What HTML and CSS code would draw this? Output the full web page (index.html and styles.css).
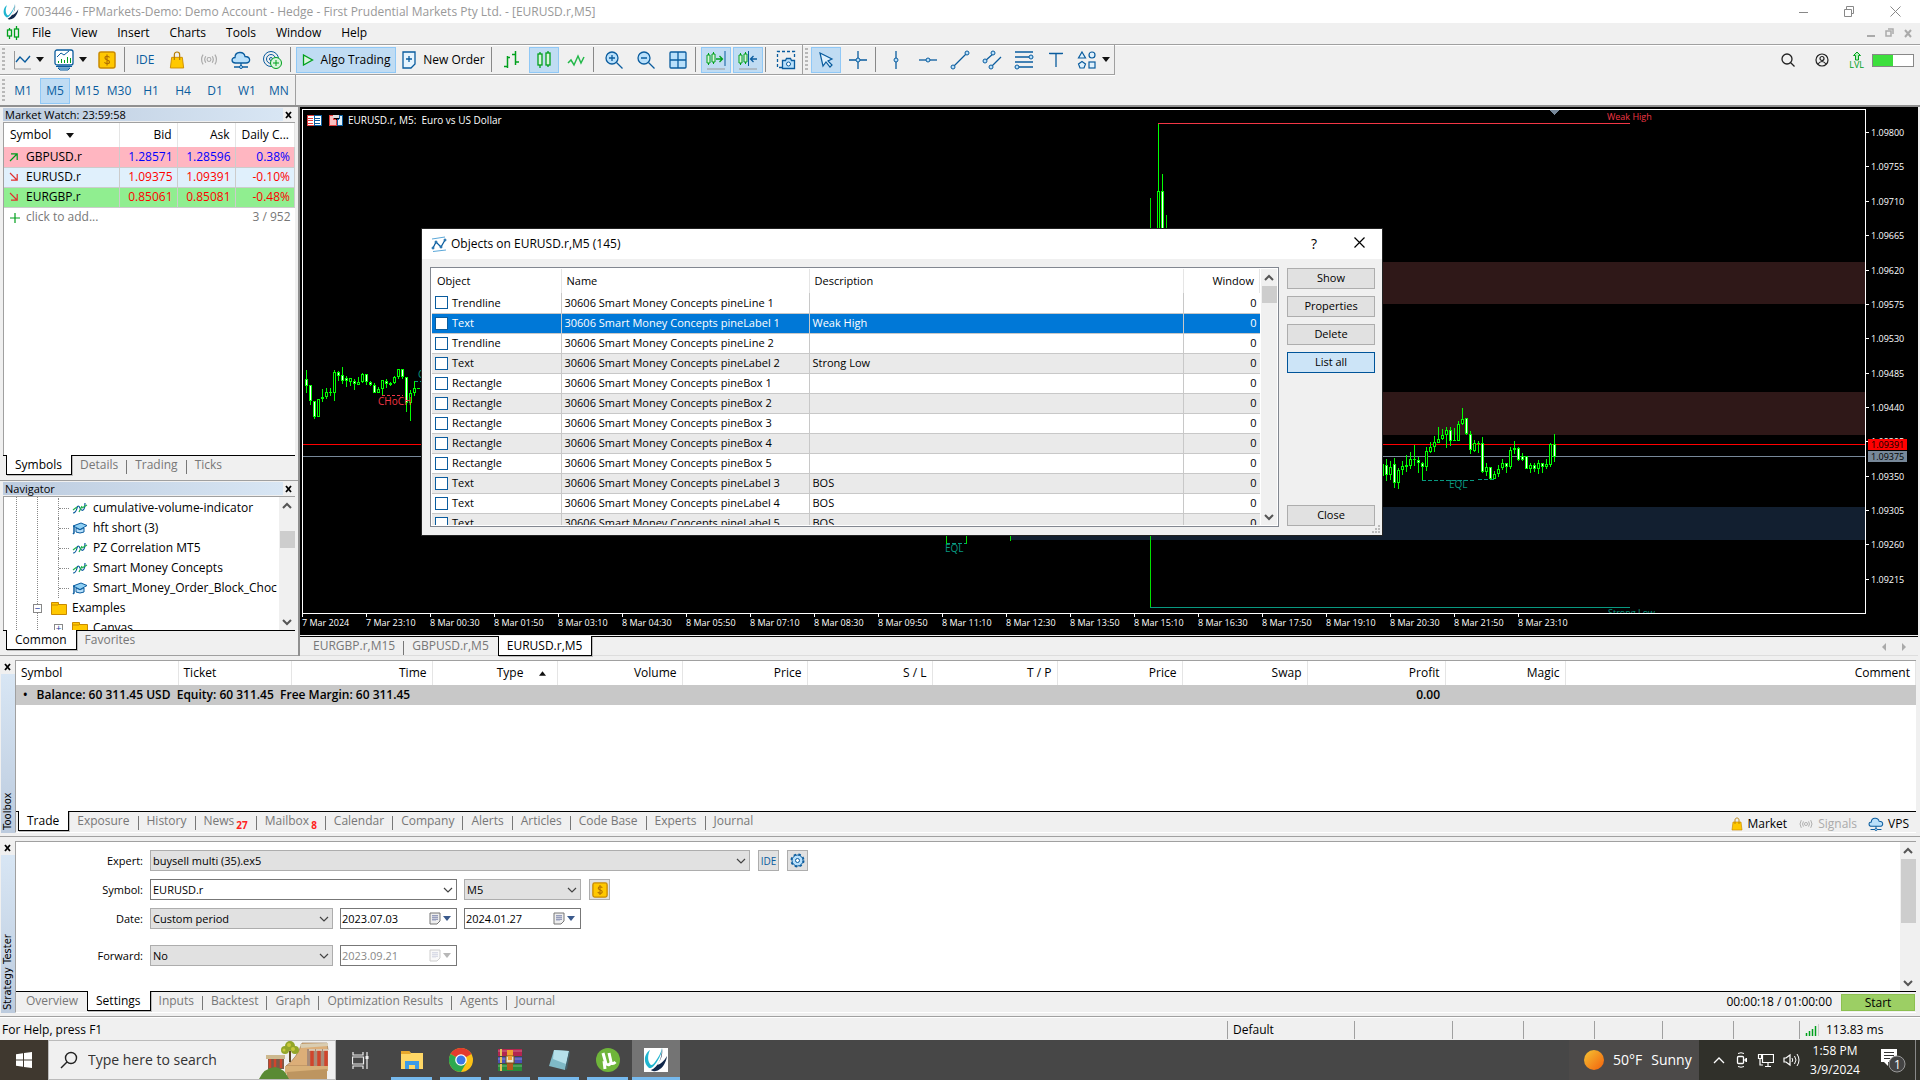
FILE: index.html
```html
<!DOCTYPE html>
<html lang="en">
<head>
<meta charset="utf-8">
<title>7003446 - FPMarkets-Demo: Demo Account - [EURUSD.r,M5]</title>
<link rel="stylesheet" href="styles.css">
</head>
<body>
<svg class="defs" aria-hidden="true">
  <symbol id="logo" viewBox="0 0 24 24"><path d="M6 2C1 5-2 14 5 20c3 1 6-3 9-8 2-4 4-7 4-12-1 5-4 10-7 14-2 3-4 4-5 2-3-4-2-10 0-14z" fill="#1fb5cf"/><path d="M18 0c1 7-1 12-5 17 4-1 7-4 10-9-1 8-6 14-11 15-3 .5-4 0-5-1 7-3 11-11 11-22z" fill="#12284b"/></symbol>
  <symbol id="chev-up" viewBox="0 0 10 10"><path d="M1 7l4-4 4 4" fill="none" stroke="#555" stroke-width="2"/></symbol>
  <symbol id="chev-down" viewBox="0 0 10 10"><path d="M1 3l4 4 4-4" fill="none" stroke="#555" stroke-width="2"/></symbol>
  <symbol id="chev-thin" viewBox="0 0 10 10"><path d="M1 3l4 4 4-4" fill="none" stroke="#444" stroke-width="1.200"/></symbol>
  <symbol id="tri" viewBox="0 0 8 5"><path d="M0 0h8L4 5z" fill="currentColor"/></symbol>
  <symbol id="cross" viewBox="0 0 8 8"><path d="M1 1l5 6M6 1L1 7" stroke="#000" stroke-width="1.800"/></symbol>
  <symbol id="dollar" viewBox="0 0 18 18"><rect x="1" y="1" width="16" height="16" rx="2" fill="#ffc800" stroke="#c98a00" stroke-width="1.500"/><path d="M11.500 6.500C11 5 7 4.500 7 7s4.500 1.500 4.500 4-4 2-5 .2M9 3.500v11" fill="none" stroke="#b06f00" stroke-width="1.200"/></symbol>
  <symbol id="bag" viewBox="0 0 18 20"><path d="M3 7h12l1.500 12h-15z" fill="#ffc800" stroke="#c98a00"/><path d="M6 10V4c0-4 6-4 6 0v6" fill="none" stroke="#b57b00" stroke-width="1.300"/></symbol>
  <symbol id="signal" viewBox="0 0 18 14"><circle cx="9" cy="7" r="1.800" fill="none" stroke="#aaa"/><path d="M6 4q-2 3 0 6M12 4q2 3 0 6M3.500 2.500q-3 4.500 0 9M14.500 2.500q3 4.500 0 9" fill="none" stroke="#aaa" stroke-width="1.100"/></symbol>
  <symbol id="cloud" viewBox="0 0 20 18"><path d="M4.500 12C0 12 0 6.500 4 6.500 4 0 13 0 14 5.500c6 0 6 6.500 1 6.500z" fill="#b9e0fb" stroke="#0a5c9e" stroke-width="1.300"/><path d="M10 12v3M3 16h14" stroke="#0a5c9e" stroke-width="1.300"/><circle cx="10" cy="16" r="1.500" fill="#b9e0fb" stroke="#0a5c9e"/></symbol>
  <symbol id="indicator" viewBox="0 0 16 14"><path d="M1 12q3 0 4-5 1-4 3 0t4 1q1-2 1-6" fill="none" stroke="#0a5c9e" stroke-width="1.200"/><path d="M1 9l4-3M7 11l3-6M10 7l5-3" fill="none" stroke="#23b14d" stroke-width="1.200"/></symbol>
  <symbol id="cap" viewBox="0 0 16 14"><path d="M1 5l8-3 6 2.500-7 4z" fill="#8fd0f5" stroke="#0a5c9e"/><path d="M4 7v4q4 2 8 0V7l-4 1.800z" fill="#b9e0fb" stroke="#0a5c9e"/><path d="M2 5v7l-1 1" stroke="#0a5c9e" stroke-width="1.500" fill="none"/></symbol>
  <symbol id="folder" viewBox="0 0 16 14"><path d="M.5 1.500h7v2h8v10H.5z" fill="#ffc800" stroke="#c98a00"/><path d="M1 4h6l1-1" stroke="#c98a00" fill="none"/></symbol>
  <symbol id="objects" viewBox="0 0 16 16"><path d="M2 12l3-6 5 5 4-7" fill="none" stroke="#0a5c9e" stroke-width="1.300"/><path d="M1 3l13-2M2 15.500l13-1.500" stroke="#5aa7d8" fill="none"/><g fill="#8fd0f5" stroke="#0a5c9e"><circle cx="2" cy="12" r="1"/><circle cx="5" cy="6" r="1"/><circle cx="10" cy="11" r="1"/><circle cx="14" cy="4" r="1"/></g></symbol>
  <symbol id="calendar" viewBox="0 0 12 13"><path d="M1 1h10v8l-3 3H1z" fill="#eee" stroke="#777"/><path d="M3 3.500h6M3 5.500h6M3 7.500h6M4 3v6M6 3v6M8 3v5" stroke="#8a93b5" stroke-width=".8"/></symbol>
</svg>

<header class="titlebar">
  <svg class="i16"><use href="#logo"/></svg>
  <h1>7003446 - FPMarkets-Demo: Demo Account - Hedge - First Prudential Markets Pty Ltd. - [EURUSD.r,M5]</h1>
  <div class="win-controls">
    <button aria-label="Minimize"><svg width="11" height="11"><path d="M1 6.500h9" stroke="#888"/></svg></button>
    <button aria-label="Restore"><svg width="11" height="11"><path d="M.5 3.500h7v7h-7zM2.500 3V.5h7v7H8" fill="none" stroke="#888"/></svg></button>
    <button aria-label="Close"><svg width="11" height="11"><path d="M.5.5l10 10M10.500.5l-10 10" stroke="#888"/></svg></button>
  </div>
</header>

<nav class="menubar" aria-label="Main menu">
  <svg width="14" height="14"><g fill="#f0f0f0" stroke="#00a01c" stroke-width="1.300"><path d="M3.500 2v11M10.500 0v14"/><rect x="1.500" y="4" width="4" height="6"/><rect x="8.500" y="3" width="4" height="8"/></g></svg>
  <button>File</button><button>View</button><button>Insert</button><button>Charts</button><button>Tools</button><button>Window</button><button>Help</button>
  <div class="mdi-controls"><svg width="46" height="10"><path d="M0 8h8" stroke="#aaa" stroke-width="2"/><path d="M19 3h5v5h-5zM21 1h5v5" fill="none" stroke="#aaa" stroke-width="1.500"/><path d="M38 2l6 7M44 2l-6 7" stroke="#aaa" stroke-width="2"/></svg></div>
</nav>

<div class="toolbar">
  <div class="bar">
    <span class="grip"></span>
    <button class="tool drop" aria-label="Chart line"><svg width="18" height="20"><path d="M1.500 1v18H18" fill="none" stroke="#999"/><path d="M3 12l4-5 5 5 5-6" fill="none" stroke="#0a5c9e" stroke-width="1.400"/></svg><svg class="tri"><use href="#tri"/></svg></button>
    <button class="tool drop" aria-label="Profiles"><svg width="20" height="22"><rect x="1" y="1" width="18" height="15" rx="2" fill="#fff" stroke="#0a5c9e" stroke-width="1.300"/><path d="M3 8l4-4 3 2 5-4" fill="none" stroke="#0a5c9e"/><path d="M4.500 14v-2M7.500 14v-4M10.500 14v-3M13.500 14V8M16.500 14v-5" stroke="#00a01c"/><path d="M2 17.500h16M4 19l2 2h8l2-2z" fill="#b9e0fb" stroke="#0a5c9e"/></svg><svg class="tri"><use href="#tri"/></svg></button>
    <button class="tool" aria-label="Market watch"><svg width="18" height="18"><use href="#dollar"/></svg></button>
    <span class="tsep"></span>
    <button class="tool blue">IDE</button>
    <button class="tool" aria-label="Market"><svg width="16" height="18"><use href="#bag"/></svg></button>
    <button class="tool" aria-label="Signals"><svg width="20" height="15"><use href="#signal"/></svg></button>
    <button class="tool" aria-label="Virtual hosting"><svg width="20" height="18"><use href="#cloud"/></svg></button>
    <button class="tool" aria-label="Copy trading"><svg width="20" height="20"><g fill="none" stroke="#0a5c9e"><circle cx="8" cy="9" r="7.500"/><circle cx="8" cy="9" r="4.500"/><circle cx="8" cy="9" r="1.500"/></g><circle cx="13" cy="13" r="5.500" fill="#d9f5dd" stroke="#00a01c"/><path d="M10 13h6M13 10v6" stroke="#00a01c"/></svg></button>
    <span class="tsep"></span>
    <button class="tool on algo"><svg width="12" height="12"><path d="M1.500 1v10l9-5z" fill="#d9f5dd" stroke="#00a01c" stroke-width="1.300"/></svg>Algo Trading</button>
    <button class="tool order"><svg width="14" height="18"><path d="M1 1h12v12l-4 4H1z" fill="#e6f4fe" stroke="#0a5c9e" stroke-width="1.300"/><path d="M4 8h6M7 5v6" stroke="#0a5c9e" stroke-width="1.300"/></svg>New Order</button>
    <span class="tsep"></span>
    <button class="tool" aria-label="Bar chart"><svg width="18" height="18"><path d="M4.500 5v12M4.500 6.500H7M1 15.500h3.500M12.500 0v14M9 3.500h3.500M12.500 11H16" fill="none" stroke="#00a01c" stroke-width="1.500"/></svg></button>
    <button class="tool on" aria-label="Candles"><svg width="16" height="18"><path d="M4 1v16M12 0v16" stroke="#00a01c" stroke-width="1.300"/><rect x="2" y="3" width="4" height="11" fill="#d9f5dd" stroke="#00a01c" stroke-width="1.300"/><rect x="10" y="2" width="4" height="12" fill="#d9f5dd" stroke="#00a01c" stroke-width="1.300"/></svg></button>
    <button class="tool" aria-label="Line chart"><svg width="18" height="14"><path d="M1 10l3-3 3 5 4-9 3 7 3-6" fill="none" stroke="#23b84a" stroke-width="1.500"/></svg></button>
    <span class="tsep"></span>
    <button class="tool" aria-label="Zoom in"><svg width="18" height="18"><circle cx="7" cy="7" r="6" fill="#b9e0fb" stroke="#0a5c9e" stroke-width="1.300"/><path d="M4 7h6M7 4v6M11.500 11.500l6 6" stroke="#0a5c9e" stroke-width="1.300"/></svg></button>
    <button class="tool" aria-label="Zoom out"><svg width="18" height="18"><circle cx="7" cy="7" r="6" fill="#b9e0fb" stroke="#0a5c9e" stroke-width="1.300"/><path d="M4 7h6M11.500 11.500l6 6" stroke="#0a5c9e" stroke-width="1.300"/></svg></button>
    <button class="tool" aria-label="Tile windows"><svg width="18" height="18"><rect x="1" y="1" width="16" height="16" rx="1" fill="#b9e0fb" stroke="#0a5c9e" stroke-width="1.300"/><path d="M1 9h16M9 1v16" stroke="#0a5c9e" stroke-width="1.300"/></svg></button>
    <span class="tsep"></span>
    <button class="tool on" aria-label="Auto scroll"><svg width="20" height="20"><path d="M2.500 3v12M7.500 2v12" stroke="#00a01c"/><path d="M1 5h3v8H1zM6 4h3v8H6z" fill="#d9f5dd" stroke="#00a01c"/><path d="M10 9h6M13.500 6l3 3-3 3" fill="none" stroke="#00a01c" stroke-width="1.300"/><path d="M19 1v15" stroke="#0a5c9e"/><path d="M1 19h18" stroke="#999"/></svg></button>
    <button class="tool on" aria-label="Chart shift"><svg width="20" height="20"><path d="M2.500 3v12M7.500 2v12" stroke="#00a01c"/><path d="M1 5h3v8H1zM6 4h3v8H6z" fill="#d9f5dd" stroke="#00a01c"/><path d="M19 9h-6M15.500 6l-3 3 3 3" fill="none" stroke="#0a5c9e" stroke-width="1.300"/><path d="M10.500 1v15" stroke="#0a5c9e"/><path d="M1 19h18" stroke="#999"/></svg></button>
    <span class="tsep"></span>
    <button class="tool" aria-label="Screenshot"><svg width="20" height="20"><path d="M6 17.500H1.500V1.500h17V8" fill="none" stroke="#0a5c9e" stroke-width="1.300" stroke-dasharray="3 2"/><path d="M6.500 10.500h3l1-2h4l1 2h3v8h-12z" fill="#b9e0fb" stroke="#0a5c9e" stroke-width="1.300"/><circle cx="12.500" cy="14" r="2" fill="#fff" stroke="#0a5c9e"/></svg></button>
  </div>
  <div class="bar">
    <span class="grip"></span>
    <button class="tool on" aria-label="Cursor"><svg width="16" height="16"><path d="M2 1l3 13 3-4 4 5 2-2-4-4 4-2z" fill="#dff1fd" stroke="#0a5c9e" stroke-width="1.200"/></svg></button>
    <button class="tool" aria-label="Crosshair"><svg width="18" height="18"><path d="M9 0v18M0 9h18" stroke="#0a5c9e" stroke-width="1.300"/><circle cx="9" cy="9" r="2" fill="#b9e0fb" stroke="#0a5c9e"/></svg></button>
    <span class="tsep"></span>
    <button class="tool" aria-label="Vertical line"><svg width="18" height="18"><path d="M9 0v18" stroke="#0a5c9e" stroke-width="1.300"/><circle cx="9" cy="9" r="2" fill="#b9e0fb" stroke="#0a5c9e"/></svg></button>
    <button class="tool" aria-label="Horizontal line"><svg width="18" height="18"><path d="M0 9h18" stroke="#0a5c9e" stroke-width="1.300"/><circle cx="9" cy="9" r="2" fill="#b9e0fb" stroke="#0a5c9e"/></svg></button>
    <button class="tool" aria-label="Trendline"><svg width="20" height="20"><path d="M3 17L17 3" stroke="#0a5c9e" stroke-width="1.300"/><g fill="#b9e0fb" stroke="#0a5c9e"><circle cx="3" cy="17" r="2"/><circle cx="17" cy="3" r="2"/></g></svg></button>
    <button class="tool" aria-label="Channel"><svg width="20" height="20"><path d="M3 11l9-8M9 17l10-10" stroke="#0a5c9e" stroke-width="1.300"/><g fill="#b9e0fb" stroke="#0a5c9e"><circle cx="3" cy="11" r="2"/><circle cx="11" cy="3" r="2"/><circle cx="9" cy="17" r="2"/></g></svg></button>
    <button class="tool" aria-label="Fibonacci"><svg width="20" height="20"><path d="M1 2h18M1 7h18M1 12h18M1 17h18" stroke="#0a5c9e" stroke-width="1.300"/><g fill="#b9e0fb" stroke="#0a5c9e"><circle cx="17" cy="7" r="2"/><circle cx="3" cy="17" r="2"/></g></svg></button>
    <button class="tool" aria-label="Text"><svg width="14" height="16"><path d="M.5 2V1.500h13V2M7 1.500V15" fill="none" stroke="#0a5c9e" stroke-width="1.300"/></svg></button>
    <button class="tool drop" aria-label="Shapes"><svg width="20" height="20"><g fill="#dff1fd" stroke="#0a5c9e" stroke-width="1.200"><path d="M5 2l3.500 6h-7z"/><circle cx="15" cy="5" r="3"/><path d="M5 11.500l3.500 2.500-1.500 4H3l-1.500-4z"/><rect x="12" y="12" width="6" height="6"/></g></svg><svg class="tri"><use href="#tri"/></svg></button>
  </div>
  <div class="right-tools">
    <button aria-label="Search"><svg width="14" height="14"><circle cx="6" cy="6" r="5" fill="none" stroke="#222" stroke-width="1.300"/><path d="M9.500 9.500l4 4" stroke="#222" stroke-width="1.300"/></svg></button>
    <button aria-label="Account"><svg width="14" height="14"><g fill="none" stroke="#222" stroke-width="1.200"><circle cx="7" cy="7" r="6"/><circle cx="7" cy="5.500" r="2"/><path d="M3 11q4-5 8 0"/></g></svg></button>
    <span class="lvl"><svg width="10" height="10"><path d="M5 1l3.500 3.500h-2V9h-3V4.500h-2z" fill="#b6f2bd" stroke="#00a01c"/></svg>LVL</span>
    <span class="level-bar"></span>
  </div>
</div>
<div class="toolbar frames">
  <div class="bar">
    <span class="grip"></span>
    <button class="tool">M1</button><button class="tool on">M5</button><button class="tool">M15</button><button class="tool">M30</button><button class="tool">H1</button><button class="tool">H4</button><button class="tool">D1</button><button class="tool">W1</button><button class="tool">MN</button>
  </div>
</div>

<main class="workspace">
  <aside class="side">
    <section class="panel watch">
      <div class="panel-title"><h2>Market Watch: 23:59:58</h2><button aria-label="Close Market Watch"><svg class="x"><use href="#cross"/></svg></button></div>
      <div class="panel-body">
        <table>
          <thead><tr><th class="sym">Symbol <svg class="tri"><use href="#tri"/></svg></th><th>Bid</th><th>Ask</th><th>Daily C...</th></tr></thead>
          <tbody>
            <tr class="pink rise"><td><svg width="8" height="8"><path d="M0 8l7-7M1 .8h6.200V7" fill="none" stroke="#009a1c" stroke-width="1.200"/></svg>GBPUSD.r</td><td>1.28571</td><td>1.28596</td><td>0.38%</td></tr>
            <tr class="pale fall"><td><svg width="8" height="8"><path d="M0 0l7 7M1 7.200h6.200V1" fill="none" stroke="#e03030" stroke-width="1.200"/></svg>EURUSD.r</td><td>1.09375</td><td>1.09391</td><td>-0.10%</td></tr>
            <tr class="green fall"><td><svg width="8" height="8"><path d="M0 0l7 7M1 7.200h6.200V1" fill="none" stroke="#e03030" stroke-width="1.200"/></svg>EURGBP.r</td><td>0.85061</td><td>0.85081</td><td>-0.48%</td></tr>
            <tr class="add"><td colspan="3"><svg width="10" height="10"><path d="M0 5h10M5 0v10" stroke="#00a01c" stroke-width="1.200"/></svg>click to add...</td><td>3 / 952</td></tr>
          </tbody>
        </table>
      </div>
      <div class="tabs"><button class="active">Symbols</button><button>Details</button><button>Trading</button><button>Ticks</button></div>
    </section>
    <section class="panel navigator">
      <div class="panel-title"><h2>Navigator</h2><button aria-label="Close Navigator"><svg class="x"><use href="#cross"/></svg></button></div>
      <div class="panel-body tree-wrap">
        <ul class="tree">
          <li class="leaf"><svg><use href="#indicator"/></svg>cumulative-volume-indicator</li>
          <li class="leaf"><svg><use href="#cap"/></svg>hft short (3)</li>
          <li class="leaf"><svg><use href="#indicator"/></svg>PZ Correlation MT5</li>
          <li class="leaf"><svg><use href="#indicator"/></svg>Smart Money Concepts</li>
          <li class="leaf"><svg><use href="#cap"/></svg>Smart_Money_Order_Block_Choc</li>
          <li class="node"><span class="box">−</span><svg><use href="#folder"/></svg>Examples</li>
          <li class="node sub"><span class="box">+</span><svg><use href="#folder"/></svg>Canvas</li>
        </ul>
        <div class="scroll"><svg><use href="#chev-up"/></svg><span class="thumb nav-thumb"></span><svg class="end"><use href="#chev-down"/></svg></div>
      </div>
      <div class="tabs"><button class="active">Common</button><button>Favorites</button></div>
    </section>
  </aside>

  <section class="charts">
    <svg class="chart" role="img" aria-label="EURUSD.r M5 candlestick chart">
      <g transform="translate(-300 -107)" shape-rendering="crispEdges">
        <rect x="1381" y="262" width="484" height="42" fill="#2f1818"/>
        <rect x="1381" y="392" width="484" height="43" fill="#2f1818"/>
        <rect x="1011" y="507" width="854" height="33" fill="#121f30"/>
        <path d="M303 444.500H1865" stroke="#f00"/>
        <path d="M303 456.500H1865" stroke="#778899"/>
        <path d="M1158 123.500H1630" stroke="#f23645"/>
        <path d="M1150 607.500H1630" stroke="#089981"/>
        <path d="M382 395.500H403" stroke="#f23645" stroke-dasharray="3 2"/>
        <path d="M414 381.500h8M1422 480.500H1476M1478 479.500H1494M946 543.500H966" stroke="#089981" stroke-dasharray="4 2" fill="none"/>
        <path d="M946.500 535v9M966.500 535v9M1010.500 535v6M1150.500 535v72M1150.500 198v31M1166.500 215v14" stroke="#00e000" fill="none"/>
        <g id="candles"></g>
        <path d="M302.500 614V109.500H1865.500V613.500M302 613.500H1866" fill="none" stroke="#fff"/>
        <path d="M1549 110h10l-5 5z" fill="#778899"/>
        <g id="price-ticks" class="axis"></g>
        <g id="time-ticks" class="axis"></g>
        <rect x="1868" y="439" width="39" height="11" fill="#f00"/>
        <rect x="1868" y="451" width="39" height="11" fill="#778899"/>
        <g class="axis"><text class="ink" x="1871" y="448">1.09391</text><text class="ink" x="1871" y="460">1.09375</text></g>
        <g class="marks"><text class="red" x="1607" y="120">Weak High</text><text class="red big" x="378" y="405">CHoCH</text><text class="teal big" x="1449" y="488">EQL</text><text class="teal big" x="945" y="552">EQL</text><text class="teal big" x="418" y="378">C</text></g>
        <svg x="1600" y="600" width="60" height="13"><text class="teal marks" x="8" y="16">Strong Low</text></svg>
        <path d="M307 115h7v10h-7z" fill="#fff" stroke="#e04040"/><path d="M314 115h7v10h-7z" fill="#fff" stroke="#0a5c9e"/><path d="M308 118h5M308 120.500h5M308 123h5" stroke="#e04040"/><path d="M315 118h5M315 120.500h5M315 123h5" stroke="#0a5c9e"/>
        <path d="M329 115h4v4l3 1v5h-7z" fill="#f8c0c0" stroke="#e04040"/><path d="M337 120l2-1v-4h3v10h-5z" fill="#dff1fd" stroke="#0a5c9e"/><path d="M333 115h6v3h-6z" fill="#ddd"/>
        <text class="chart-title" x="348" y="124" xml:space="preserve">EURUSD.r, M5:  Euro vs US Dollar</text>
      </g>
    </svg>
    <div class="tabs chart-tabs"><button>EURGBP.r,M15</button><button>GBPUSD.r,M5</button><button class="active">EURUSD.r,M5</button><svg class="arrows" width="26" height="8"><path d="M4 0v8L0 4zM20 0v8l4-4z" fill="#aaa"/></svg></div>
  </section>
</main>

<section class="dock toolbox">
  <div class="strip"><button aria-label="Close Toolbox"><svg class="x"><use href="#cross"/></svg></button><span>Toolbox</span></div>
  <div class="dock-main">
    <div class="dock-body">
      <table>
        <colgroup><col class="c162"><col class="c113"><col class="c141"><col class="c125"><col class="c125"><col class="c125"><col class="c125"><col class="c125"><col class="c125"><col class="c125"><col class="c138"><col class="c120"><col></colgroup>
        <thead><tr><th class="l">Symbol</th><th class="l">Ticket</th><th>Time</th><th>Type <svg class="tri"><use href="#tri"/></svg></th><th>Volume</th><th>Price</th><th>S / L</th><th>T / P</th><th>Price</th><th>Swap</th><th>Profit</th><th>Magic</th><th>Comment</th></tr></thead>
        <tbody><tr><td colspan="10"><span class="dot">•</span>Balance: 60 311.45 USD&nbsp; Equity: 60 311.45&nbsp; Free Margin: 60 311.45</td><td class="r">0.00</td><td colspan="2"></td></tr></tbody>
      </table>
    </div>
    <div class="tabs"><button class="active">Trade</button><button>Exposure</button><button>History</button><button>News<sub>27</sub></button><button>Mailbox<sub>8</sub></button><button>Calendar</button><button>Company</button><button>Alerts</button><button>Articles</button><button>Code Base</button><button>Experts</button><button>Journal</button>
      <div class="services"><a href="#market"><svg width="12" height="14"><use href="#bag"/></svg>Market</a><a href="#signals" class="off"><svg width="16" height="12"><use href="#signal"/></svg>Signals</a><a href="#vps"><svg width="16" height="14"><use href="#cloud"/></svg>VPS</a></div>
    </div>
  </div>
</section>

<section class="dock tester">
  <div class="strip"><button aria-label="Close Strategy Tester"><svg class="x"><use href="#cross"/></svg></button><span>Strategy Tester</span></div>
  <div class="dock-main">
    <div class="dock-body">
      <form class="settings">
        <div class="row"><label for="expert">Expert:</label><span class="sel w600"><select id="expert"><option>buysell multi (35).ex5</option></select><svg><use href="#chev-thin"/></svg></span><button type="button" class="sq blue">IDE</button><button type="button" class="sq" aria-label="Expert settings"><svg width="15" height="15"><circle cx="7.500" cy="7.500" r="5.500" fill="#b9e0fb" stroke="#0a5c9e"/><circle cx="7.500" cy="7.500" r="6.200" fill="none" stroke="#0a5c9e" stroke-dasharray="2.500 2.400" stroke-width="1.600"/><circle cx="7.500" cy="7.500" r="2" fill="#fff" stroke="#0a5c9e"/></svg></button></div>
        <div class="row"><label for="symbol">Symbol:</label><span class="sel w307 white"><select id="symbol"><option>EURUSD.r</option></select><svg><use href="#chev-thin"/></svg></span><span class="sel w117"><select aria-label="Timeframe"><option>M5</option></select><svg><use href="#chev-thin"/></svg></span><button type="button" class="sq" aria-label="Symbol specification"><svg width="16" height="16"><use href="#dollar"/></svg></button></div>
        <div class="row"><label for="period">Date:</label><span class="sel w183"><select id="period"><option>Custom period</option></select><svg><use href="#chev-thin"/></svg></span><span class="date"><input aria-label="From" value="2023.07.03"><svg width="12" height="13"><use href="#calendar"/></svg><svg class="tri"><use href="#tri"/></svg></span><span class="date"><input aria-label="To" value="2024.01.27"><svg width="12" height="13"><use href="#calendar"/></svg><svg class="tri"><use href="#tri"/></svg></span></div>
        <div class="row forward"><label for="forward">Forward:</label><span class="sel w183"><select id="forward"><option>No</option></select><svg><use href="#chev-thin"/></svg></span><span class="date off"><input aria-label="Forward date" value="2023.09.21" disabled><svg width="12" height="13"><use href="#calendar"/></svg><svg class="tri"><use href="#tri"/></svg></span></div>
      </form>
      <div class="scroll"><svg><use href="#chev-up"/></svg><span class="thumb tester-thumb"></span><svg class="end"><use href="#chev-down"/></svg></div>
    </div>
    <div class="tabs"><button>Overview</button><button class="active">Settings</button><button>Inputs</button><button>Backtest</button><button>Graph</button><button>Optimization Results</button><button>Agents</button><button>Journal</button>
      <div class="services"><span>00:00:18 / 01:00:00</span><button class="start">Start</button></div>
    </div>
  </div>
</section>

<footer class="status">
  <span class="help">For Help, press F1</span><span class="s127">Default</span><span class="s98"></span><span class="s71"></span><span class="s71"></span><span class="s68"></span><span class="s71"></span><span class="s66"></span><span class="s121"><svg width="14" height="12"><path d="M1.500 12V9M4.500 12V7M7.500 12V5M10.500 12V2" stroke="#00a01c" stroke-width="1.500"/><path d="M13.500 12V0" stroke="#ccc"/></svg>113.83 ms</span>
</footer>

<footer class="taskbar">
  <button class="start-btn" aria-label="Start menu"><svg width="16" height="16"><path d="M0 2.300l7-1v6.200H0zM8 1.100L16 0v7.500H8zM0 8.500h7v6.200l-7-1zM8 8.500h8V16l-8-1.100z" fill="#fff"/></svg></button>
  <div class="search"><svg width="18" height="18"><circle cx="11" cy="7" r="5.500" fill="none" stroke="#222" stroke-width="1.400"/><path d="M7 11l-6 6" stroke="#222" stroke-width="1.400"/></svg><input aria-label="Search" placeholder="Type here to search">
    <svg class="art" width="72" height="38" viewBox="257 1041 72 38"><path d="M265 1055h19v4h-19z" fill="#cdb98f"/><path d="M267 1059h16v10h-16z" fill="#7a5a48"/><path d="M269 1059v9M274 1059v9M280 1059v9" stroke="#d0452c" stroke-width="2.500"/><path d="M301 1043h25l1 7h-19v16h-23q11-8 16-23z" fill="#dcae78" stroke="#8c6a45" stroke-width=".6"/><path d="M299 1044l28-1v3l-27 2z" fill="#d9cdb2"/><path d="M306 1049h21v17h-21z" fill="#a98c78"/><path d="M311 1050v16M318 1050v16M325 1050v16" stroke="#d0452c" stroke-width="3.500"/><path d="M308 1050h6M315 1050h6M322 1050h5" stroke="#e6dcc5" stroke-width="1.500"/><path d="M284 1066h43v5l-43 3z" fill="#d8b078"/><path d="M286 1072l40-3v10h-40z" fill="#bd9560"/><path d="M258 1079q5-11 16-12 9 1 14 12z" fill="#5a8a34"/><path d="M289 1051v11" stroke="#5e4526" stroke-width="2"/><g fill="#93a62a"><circle cx="284" cy="1050" r="4"/><circle cx="289" cy="1046" r="5"/><circle cx="294" cy="1050" r="4"/></g><g fill="#c8c83c"><circle cx="288" cy="1045" r="2"/><circle cx="292" cy="1049" r="2"/><circle cx="283" cy="1050" r="1.500"/></g></svg>
  </div>
  <button class="task plain" aria-label="Task view"><svg width="17" height="17"><path d="M1 0v3h10V0M1 17v-3h10v3M.5 5h11v7H.500zM15 0v17" fill="none" stroke="#eee" stroke-width="1.200"/><path d="M13.500 4h3v3h-3z" fill="#eee"/></svg></button>
  <button class="task" aria-label="File Explorer"><svg width="22" height="20"><path d="M0 1h8l2 2h12v16H0z" fill="#ffd766"/><path d="M0 1h8l2 3H0z" fill="#e8a82c"/><path d="M4 19v-8h14v8h-4v-4H8v4z" fill="#3c9be8"/></svg></button>
  <button class="task" aria-label="Chrome"><svg width="24" height="24" viewBox="0 0 24 24"><circle cx="12" cy="12" r="12" fill="#fbc116"/><path d="M12 12L1.600 6A12 12 0 0 1 22.400 6z" fill="#e33b2e"/><path d="M1.600 6A12 12 0 0 0 12 24l5.200-9L12 12z" fill="#2da94f"/><circle cx="12" cy="12" r="5.800" fill="#fff"/><circle cx="12" cy="12" r="4.500" fill="#3b78e7"/></svg></button>
  <button class="task" aria-label="WinRAR"><svg width="24" height="22"><path d="M0 0h24v7H0z" fill="#b3254f"/><path d="M0 8h24v6H0z" fill="#4a52b8"/><path d="M0 15h24v7H0z" fill="#2a8a3a"/><path d="M0 2h24M0 10h24M0 17h24" stroke="#fff" stroke-opacity=".35"/><path d="M3 0v7M3 8v6M3 15v7" stroke="#e6c25a" stroke-width="2"/><path d="M9 1h6v6H9z" fill="#f0a030"/><path d="M9 12h6v9H9z" fill="#b5571e"/><path d="M8 7h8v7H8z" fill="#e8e2d0" stroke="#7a5510"/><path d="M10 7h4v4h-4z" fill="#f0a030"/></svg></button>
  <button class="task" aria-label="Notepad"><svg width="24" height="24"><path d="M7 2l15 1-4 19-16-4z" fill="#7fb9c6"/><path d="M7 2l15 1-3 13-13-5z" fill="#b5e0ea"/><path d="M22 3l-4 19 2-1 3-17z" fill="#44606a"/></svg></button>
  <button class="task" aria-label="uTorrent"><svg width="24" height="24"><circle cx="12" cy="12" r="12" fill="#6fb53a"/><path d="M7 5l3 11q4 2 5-2l-2-9M8 13l1 8M14.500 14q2 3 5 0" fill="none" stroke="#fff" stroke-width="3"/></svg></button>
  <button class="task current" aria-label="MetaTrader"><svg class="mt" width="24" height="24"><use href="#logo"/></svg></button>
  <div class="weather"><svg width="20" height="20"><defs><linearGradient id="sun" x2="1" y2="1"><stop stop-color="#f5c433"/><stop offset="1" stop-color="#f2600c"/></linearGradient></defs><circle cx="10" cy="10" r="10" fill="url(#sun)"/></svg><span>50°F</span><span>Sunny</span></div>
  <div class="tray">
    <svg width="12" height="8"><path d="M1 7l5-5 5 5" fill="none" stroke="#fff" stroke-width="1.300"/></svg>
    <svg width="14" height="16"><path d="M4 1.500q3-1.500 6 0M4 14.500q3 1.500 6 0" fill="none" stroke="#fff"/><rect x="3.500" y="4.500" width="6" height="7" rx="1" fill="none" stroke="#fff" stroke-width="1.300"/><path d="M10.500 8l2-2v4z" fill="#fff" stroke="#fff"/></svg>
    <svg width="17" height="15"><path d="M5.500 1.500h11v8h-11zM8 13.500h6M11 10v3M1.500 1.500h3v4h-3zM3 6v6h3" fill="none" stroke="#fff" stroke-width="1.200"/></svg>
    <svg width="17" height="14"><path d="M1 5h2l4-3v10L3 9H1z" fill="none" stroke="#fff" stroke-width="1.200"/><path d="M9 5q1.500 2 0 4M11.500 3q3 4 0 8M14 1q4 6 0 12" fill="none" stroke="#fff"/></svg>
    <div class="clock"><span>1:58 PM</span><span>3/9/2024</span></div>
    <button class="notify" aria-label="1 notification"><svg width="26" height="26"><path d="M1 2h16v13H8v4l-4-4H1z" fill="#fff"/><path d="M4 5.500h10M4 8.500h10M4 11.500h6" stroke="#333"/><circle cx="17" cy="17" r="8" fill="#444" stroke="#999"/></svg><b>1</b></button>
  </div>
</footer>

<div class="dialog" role="dialog" aria-labelledby="dlg-title">
  <div class="dlg-head"><svg class="i16"><use href="#objects"/></svg><h2 id="dlg-title">Objects on EURUSD.r,M5 (145)</h2><button class="q" aria-label="Help">?</button><button aria-label="Close dialog"><svg width="11" height="11"><path d="M.5.5l10 10M10.500.5l-10 10" stroke="#000" stroke-width="1.200"/></svg></button></div>
  <div class="dlg-body">
    <div class="list">
      <div class="list-view">
      <table>
        <colgroup><col class="c129"><col class="c248"><col><col class="c76"></colgroup>
        <thead><tr><th>Object</th><th>Name</th><th>Description</th><th class="r">Window</th></tr></thead>
        <tbody>
          <tr><td><label><input type="checkbox">Trendline</label></td><td>30606 Smart Money Concepts pineLine 1</td><td></td><td>0</td></tr>
          <tr class="selected"><td><label><input type="checkbox">Text</label></td><td>30606 Smart Money Concepts pineLabel 1</td><td>Weak High</td><td>0</td></tr>
          <tr><td><label><input type="checkbox">Trendline</label></td><td>30606 Smart Money Concepts pineLine 2</td><td></td><td>0</td></tr>
          <tr><td><label><input type="checkbox">Text</label></td><td>30606 Smart Money Concepts pineLabel 2</td><td>Strong Low</td><td>0</td></tr>
          <tr><td><label><input type="checkbox">Rectangle</label></td><td>30606 Smart Money Concepts pineBox 1</td><td></td><td>0</td></tr>
          <tr><td><label><input type="checkbox">Rectangle</label></td><td>30606 Smart Money Concepts pineBox 2</td><td></td><td>0</td></tr>
          <tr><td><label><input type="checkbox">Rectangle</label></td><td>30606 Smart Money Concepts pineBox 3</td><td></td><td>0</td></tr>
          <tr><td><label><input type="checkbox">Rectangle</label></td><td>30606 Smart Money Concepts pineBox 4</td><td></td><td>0</td></tr>
          <tr><td><label><input type="checkbox">Rectangle</label></td><td>30606 Smart Money Concepts pineBox 5</td><td></td><td>0</td></tr>
          <tr><td><label><input type="checkbox">Text</label></td><td>30606 Smart Money Concepts pineLabel 3</td><td>BOS</td><td>0</td></tr>
          <tr><td><label><input type="checkbox">Text</label></td><td>30606 Smart Money Concepts pineLabel 4</td><td>BOS</td><td>0</td></tr>
          <tr><td><label><input type="checkbox">Text</label></td><td>30606 Smart Money Concepts pineLabel 5</td><td>BOS</td><td>0</td></tr>
        </tbody>
      </table>
      </div>
      <div class="scroll"><svg><use href="#chev-up"/></svg><span class="thumb"></span><svg class="end"><use href="#chev-down"/></svg></div>
    </div>
    <div class="dlg-actions"><button>Show</button><button>Properties</button><button>Delete</button><button class="focus">List all</button><button class="close">Close</button></div>
  </div>
  <svg class="resize" width="8" height="8"><path d="M6 0h2v2H6zM3 3h2v2H3zM6 3h2v2H6zM0 6h2v2H0zM3 6h2v2H3zM6 6h2v2H6z" fill="#bbb"/></svg>
</div>
<script src="chart.js"></script>
</body>
</html>
```
FILE: styles.css
```css
* { box-sizing: border-box; }
body {
  margin: 0; min-height: 100vh; display: flex; flex-direction: column; position: relative;
  background: #f0f0f0; color: #000; font: 12px/16px "Open Sans", "Noto Sans", sans-serif; overflow: hidden;
}
h1, h2 { margin: 0; font-size: inherit; font-weight: 400; }
button { font: inherit; color: inherit; border: 0; background: none; padding: 0; white-space: nowrap; }
table { border-collapse: collapse; width: 100%; table-layout: fixed; }
th { font-weight: 400; }
svg { flex: none; }
.defs { position: absolute; width: 0; height: 0; }
.i16 { width: 16px; height: 16px; }
.tri { width: 8px; height: 5px; color: #111; }
.x { width: 8px; height: 8px; }
.blue { color: #0a5c9e; }

.titlebar { height: 23px; background: #fff; display: flex; align-items: center; padding: 0 2px 0 3px; gap: 5px; color: #999; }
.win-controls { margin-left: auto; display: flex; }
.win-controls button { width: 46px; height: 20px; display: grid; place-items: center; }
.menubar { height: 22px; display: flex; align-items: center; padding: 0 5px 1px 6px; border-bottom: 1px solid #a0a0a0; box-shadow: 0 1px #fff; }
.menubar button { padding: 0 10px; }
.menubar svg { margin-right: 2px; }
.mdi-controls { margin-left: auto; display: flex; }

.toolbar { height: 30px; display: flex; align-items: stretch; }
.bar { display: flex; align-items: center; gap: 2px; padding-right: 1px; border-right: 1px solid #a0a0a0; border-bottom: 1px solid #a0a0a0; box-shadow: 0 1px #fff; }
.grip { width: 3px; height: 24px; margin: 0 1px 0 2px; background: repeating-linear-gradient(#b8b8b8 0 2px, transparent 2px 4px); }
.tool { min-width: 30px; height: 26px; display: flex; align-items: center; justify-content: center; border: 1px solid transparent; }
.tool.on { background: #c0dcf3; border-color: #90c8f6; }
.tool.drop { width: 40px; gap: 5px; }
.tool.algo { width: 100px; gap: 7px; }
.tool.order { width: 91px; gap: 7px; }
.tsep { width: 4px; height: 25px; border-left: 1px solid #888; }
.frames { height: 32px; border-bottom: 2px solid #909090; color: #0a5c9e; }
.frames .bar { border-bottom: 0; box-shadow: none; padding-top: 1px; }
.right-tools { margin-left: auto; display: flex; align-items: center; gap: 20px; padding-right: 6px; }
.right-tools button { display: flex; }
.lvl { display: grid; justify-items: center; color: #00a01c; font-size: 9px; line-height: 8px; margin-right: -12px; }
.level-bar { width: 42px; height: 13px; border: 1px solid #888; background: linear-gradient(90deg, #3ddf3d 50%, #fff 50%); }

.workspace { flex: 1 1 0; min-height: 0; display: flex; }
.side { width: 298px; flex: none; display: flex; flex-direction: column; }
.panel { display: flex; flex-direction: column; padding: 0 3px 4px; border-bottom: 1px solid #a0a0a0; }
.watch { flex: 1; }
.navigator { height: 175px; }
.panel-title { display: flex; align-items: center; height: 15px; }
.panel-title h2 { flex: 1; padding-left: 2px; background: linear-gradient(90deg, #bccbde, #d8e6f4); font-size: 11px; line-height: 13px; }
.panel-title button { width: 12px; display: grid; place-items: center; }
.panel-body { flex: 1; min-height: 0; background: #fff; border: 1px solid #a0a0a0; border-width: 1px 0 0 1px; }
.watch th { height: 24px; text-align: right; padding: 0 5px; border-right: 1px solid #e5e5e5; white-space: nowrap; }
.watch .sym { width: 115px; text-align: left; padding-left: 6px; }
.sym .tri { margin-left: 12px; vertical-align: middle; }
.watch th:nth-child(2), .watch th:nth-child(3) { width: 58px; }
.watch td { height: 20px; padding: 0 4px; text-align: right; border-right: 1px solid #ccc; border-bottom: 1px solid #ccc; white-space: nowrap; }
.watch td:first-child { text-align: left; color: #000; padding-left: 6px; }
.watch td svg { margin-right: 8px; overflow: visible; }
.pink { background: #ffb6c1; } .pale { background: #e0f0fc; } .green { background: #90ee90; }
.rise { color: #00f; } .fall { color: #f00; }
.watch .add td { border: 0; }
.watch .add td, .watch .add td:first-child { color: #777; }
.watch .add td svg { margin-right: 6px; vertical-align: middle; }

.tabs { display: flex; height: 21px; border-top: 1px solid #000; padding-left: 3px; color: #777; align-items: flex-start; }
.tabs > button { height: 18px; padding: 0 9px 0 8px; position: relative; }
.tabs > button:not(.active)::after { content: ""; position: absolute; right: 0; top: 4px; height: 14px; border-right: 1px solid #777; }
.tabs > button:last-of-type::after, .tabs > button:has(+ .active)::after { display: none; }
.tabs > .active { margin-top: -1px; height: 20px; background: #fff; color: #000; border: 1px solid #000; border-top: 0; box-shadow: 1px 1px #bbb; }
.tabs sub { color: #f22; font-size: 10px; font-weight: 700; line-height: 0; vertical-align: -4px; margin-left: 2px; }

.tree-wrap { display: flex; overflow: hidden; }
.tree { flex: 1; margin: 0; padding: 1px 0 0; list-style: none; min-width: 0; background: repeating-linear-gradient(#888 0 1px, transparent 1px 2px) 12px 0 / 1px 100% no-repeat, repeating-linear-gradient(#888 0 1px, transparent 1px 2px) 33px 0 / 1px 100% no-repeat; }
.tree li { height: 20px; display: flex; align-items: center; white-space: nowrap; }
.tree li svg { width: 16px; height: 14px; margin-right: 5px; }
.leaf { margin-left: 54px; border-left: 1px dotted #888; }
.leaf::before { content: ""; width: 10px; margin-right: 3px; border-top: 1px dotted #888; }
.node { padding-left: 29px; }
.node.sub { padding-left: 50px; }
.box { width: 9px; height: 9px; border: 1px solid #888; background: #fff; line-height: 6px; font-size: 10px; color: #2040a0; text-align: center; margin-right: 9px; }
.scroll { width: 16px; flex: none; background: #f0f0f0; display: flex; flex-direction: column; align-items: center; }
.scroll svg { width: 10px; height: 10px; margin: 4px 0 3px; }
.scroll .end { margin-top: auto; }
.thumb { width: 15px; height: 17px; background: #cdcdcd; }
.nav-thumb { margin-top: 17px; }
.tester-thumb { height: 64px; }

.charts { flex: 1; min-width: 0; display: flex; flex-direction: column; border-left: 2px solid #909090; border-right: 2px solid #f0f0f0; }
.chart { flex: 1; min-height: 0; width: 100%; background: #000; display: block; }
.chart-tabs { height: 20px; margin-top: 1px; padding-left: 5px; border-bottom: 1px solid #ddd; }
.arrows { margin: 6px 10px 0 auto; }
.axis, .marks { font: 9px "Open Sans", sans-serif; fill: #fff; }
.chart-title { font: 10px "Open Sans", sans-serif; fill: #fff; }
.marks .big { font-size: 10px; }
.axis .ink { fill: #000; }
.red { fill: #f23645; } .teal, .marks.teal { fill: #089981; }
.axis path { stroke: #fff; fill: none; }

.dock { display: grid; grid-template-columns: 15px minmax(0, 1fr); min-height: 180px; padding: 4px 4px 3px 0; border-bottom: 1px solid #a0a0a0; }
.toolbox { min-height: 181px; }
.strip { display: flex; flex-direction: column; align-items: center; }
.strip button { height: 14px; display: grid; place-items: center; }
.strip span { flex: 1; width: 14px; background: linear-gradient(0deg, #d8e6f4, #bccbde); writing-mode: vertical-rl; transform: rotate(180deg); font: 10px/14px "DejaVu Sans", sans-serif; padding-top: 3px; }
.dock-main { display: flex; flex-direction: column; border-left: 1px solid #a0a0a0; border-top: 1px solid #a0a0a0; border-bottom: 1px solid #fff; min-width: 0; }
.dock-body { flex: 1; background: #fff; display: flex; min-height: 0; }
.dock .tabs { padding-left: 2px; }
.toolbox table { align-self: flex-start; }
.toolbox th { height: 24px; padding: 0 5px; text-align: right; border-right: 1px solid #e5e5e5; }
.toolbox th.l { text-align: left; }
.toolbox .tri { margin: 0 6px 0 12px; vertical-align: 1px; transform: rotate(180deg); width: 7px; height: 5px; }
.toolbox td { height: 20px; padding: 0 5px 0 7px; background: #c8c8c8; font-weight: 600; }
.toolbox td.r { text-align: right; }
.dot { margin-right: 9px; }
.c162 { width: 162px; } .c113 { width: 113px; } .c141 { width: 141px; } .c125 { width: 125px; } .c138 { width: 138px; } .c120 { width: 120px; }
.services { margin-left: auto; display: flex; gap: 11px; align-items: center; height: 23px; color: #000; padding-right: 7px; }
.services a { display: flex; gap: 4px; align-items: center; color: #000; text-decoration: none; }
.services .off { color: #aaa; }
.tester .services { gap: 9px; padding: 0 1px 0 0; height: 20px; }
.start { width: 74px; height: 17px; line-height: 15px; background: #9ccf64; border: 1px solid #8cc050; }

.settings { flex: 1; padding-top: 8px; display: flex; flex-direction: column; gap: 8px; font-size: 11px; }
.row { display: flex; align-items: center; height: 21px; gap: 7px; }
.row label { width: 127px; text-align: right; }
.forward { margin-top: 8px; }
.sel { position: relative; display: flex; }
.sel select { appearance: none; width: 100%; height: 21px; border: 1px solid #adadad; background: #e1e1e1; color: #000; border-radius: 0; font: inherit; padding: 0 2px; }
.sel.white select { background: #fff; border-color: #777; }
.sel svg { position: absolute; right: 4px; top: 6px; width: 10px; height: 10px; }
.w600 { width: 600px; } .w307 { width: 307px; } .w117 { width: 117px; } .w183 { width: 183px; }
.sq { width: 21px; height: 21px; background: #e1e1e1; border: 1px solid #adadad; display: grid; place-items: center; font-size: 10px; margin-left: 1px; }
.date { width: 117px; height: 21px; border: 1px solid #777; display: flex; align-items: center; gap: 2px; padding: 0 5px 0 1px; }
.date input { flex: 1; min-width: 0; border: 0; background: none; font: inherit; padding: 0; color: #000; }
.date .tri { color: #3b5a8c; }
.date.off svg { opacity: .35; }
.date.off .tri { color: #333; }
.date.off input { color: #888; }

.status { height: 23px; display: flex; padding: 4px 0 1px; line-height: 18px; box-shadow: inset 0 1px #fff; }
.status span { border-left: 1px solid #a0a0a0; padding-left: 5px; display: flex; align-items: center; gap: 7px; }
.status .help { flex: 1; border: 0; padding-left: 2px; }
.s127 { width: 127px; } .s98 { width: 98px; } .s71 { width: 71px; } .s68 { width: 68px; } .s66 { width: 66px; } .s121 { width: 121px; }

.taskbar { height: 40px; display: flex; background: #474747; color: #fff; }
.start-btn { width: 48px; background: #3f382f; display: grid; place-items: center; }
.search { width: 288px; background: #f0f0f0; border: 1px solid #bbb; display: flex; align-items: center; padding-left: 11px; gap: 10px; }
.search input { border: 0; background: none; font: 14px/20px "Open Sans", sans-serif; width: 160px; padding: 0; flex: 1; }
.search input::placeholder { color: #333; opacity: 1; }
.search .art { margin-right: 6px; }
.task { width: 41px; height: 40px; margin-right: 8px; display: grid; place-items: center; border-bottom: 3px solid #76b9ed; padding-top: 3px; }
.task.plain { border-color: transparent; width: 48px; margin-right: 7px; }
.task.current { width: 48px; background: #747474; margin-left: -4px; }
.mt { background: #fff; }
.weather { margin-left: auto; width: 130px; background: #4c4a49; display: flex; align-items: center; gap: 9px; padding-left: 15px; font-size: 14px; }
.tray { width: 221px; background: #30302a; display: flex; align-items: center; gap: 9px; padding-left: 14px; }
.clock { display: grid; justify-items: center; line-height: 19px; flex: 1; }
.notify { position: relative; width: 46px; height: 40px; border-right: 1px solid #888; margin-right: 4px; display: grid; place-items: center; }
.notify b { position: absolute; left: 24px; top: 17px; font-weight: 400; color: #fff; }

.dialog { position: absolute; left: 422px; top: 229px; width: 960px; background: #f0f0f0; font-size: 11px; outline: 1px solid #222; }
.dlg-head { height: 30px; background: #fff; display: flex; align-items: center; padding: 0 17px 0 9px; gap: 4px; font-size: 12px; }
.dlg-head h2 { flex: 1; }
.q { margin-right: 33px; font-size: 14px; }
.dlg-body { display: flex; gap: 8px; padding: 8px 7px 8px 8px; }
.list { flex: 1; height: 260px; background: #fff; border: 1px solid #828790; padding: 1px; display: flex; overflow: hidden; }
.list-view { flex: 1; overflow: hidden; margin-right: 1px; }
.list th { height: 24px; padding: 0 5px; text-align: left; border-right: 1px solid #e5e5e5; }
.list td { height: 20px; padding: 0 3px; border-right: 1px solid #c8c8c8; border-bottom: 1px solid #c8c8c8; line-height: 16px; white-space: nowrap; }
.list td:last-child { text-align: right; border-right: 0; }
.list th.r { text-align: right; }
.list tbody tr:nth-child(even) { background: #eaeaea; }
.list tbody tr.selected { background: #0078d7; color: #fff; }
.list label { display: flex; align-items: center; gap: 4px; }
.list input { appearance: none; width: 13px; height: 13px; margin: 0; border: 1px solid #0a5c9e; background: #fff; }
.c129 { width: 129px; } .c248 { width: 248px; } .c76 { width: 76px; }
.dlg-actions { width: 88px; display: flex; flex-direction: column; gap: 7px; padding: 1px 0; }
.dlg-actions button { height: 21px; line-height: 17px; padding-bottom: 2px; background: #e1e1e1; border: 1px solid #adadad; }
.dlg-actions .focus { background: #cce4f7; border-color: #005499; }
.dlg-actions .close { margin-top: auto; }
.resize { position: absolute; right: 2px; bottom: 2px; }
```
FILE: chart.js
```js
// Each candle: x centre, wick top, wick bottom, body top, body bottom, 1 = bearish (filled white)
const candles = [
  [306,370,393,379,386,1],[310,385,405,385,401,1],[314,401,419,401,417,1],[318,399,417,399,417,0],
  [322,389,402,397,399,0],[326,388,399,392,397,0],[330,388,396,392,393,0],[334,370,401,372,393,0],
  [338,371,381,372,376,1],[342,367,384,375,381,1],[346,376,387,378,381,1],[350,378,386,378,382,0],
  [354,379,390,381,384,1],[358,377,385,382,385,0],[362,373,383,374,382,0],[366,374,385,374,382,1],
  [370,381,386,382,385,1],[374,383,393,385,393,1],[378,387,393,389,393,0],[382,380,395,380,389,0],
  [386,379,388,381,384,1],[390,382,386,383,385,0],[394,376,384,377,383,0],[398,369,379,369,377,0],
  [402,369,379,369,377,1],[406,377,412,377,403,1],[410,390,421,393,403,0],[414,381,396,388,393,0],
  [418,388,389,388,389,0],
  [1158,124,229,191,229,0],[1162,174,229,191,229,1],
  [1382,451,479,464,476,0],[1386,459,481,465,475,1],[1390,461,480,467,475,0],[1394,458,488,464,483,1],
  [1398,468,489,470,483,0],[1402,461,475,466,470,0],[1406,455,472,465,467,0],[1410,452,469,459,466,0],
  [1414,445,466,459,460,0],[1418,457,473,460,463,1],[1422,462,480,463,467,1],[1426,447,471,451,467,0],
  [1430,442,453,447,452,0],[1434,436,452,442,447,0],[1438,427,443,439,443,0],[1442,429,440,435,439,0],
  [1446,427,448,430,435,0],[1450,427,446,430,441,1],[1454,428,441,440,441,0],[1458,421,441,424,441,0],
  [1462,408,425,419,424,0],[1466,418,435,418,434,1],[1470,431,454,434,450,1],[1474,440,452,443,451,0],
  [1478,441,453,443,444,0],[1482,437,473,443,472,1],[1486,463,476,467,472,0],[1490,467,480,467,479,1],
  [1494,471,479,474,479,0],[1498,465,477,469,474,0],[1502,459,470,463,468,0],[1506,463,473,463,467,1],
  [1510,447,469,450,467,0],[1514,441,454,448,450,0],[1518,447,461,448,460,1],[1522,453,461,456,460,1],
  [1526,456,469,456,469,1],[1530,463,473,465,469,0],[1534,463,472,465,469,1],[1538,460,474,463,469,0],
  [1542,463,473,463,467,1],[1546,459,469,464,467,0],[1550,443,467,444,465,0],[1554,434,462,444,457,1],
];
document.getElementById('candles').innerHTML = candles.map(([x, h, l, t, b, bear]) =>
  `<rect x="${x}" y="${h}" width="1" height="${l - h}" fill="#0f0"/>` +
  `<rect x="${x - 1}" y="${t}" width="3" height="${Math.max(b - t, 1)}" fill="#0f0"/>` +
  (b - t > 2 ? `<rect x="${x}" y="${t + 1}" width="1" height="${b - t - 2}" fill="${bear ? '#fff' : '#000'}"/>` : '')
).join('');

const priceRows = [132, 166, 201, 235, 270, 304, 338, 373, 407, 441, 476, 510, 544, 579];
document.getElementById('price-ticks').innerHTML = priceRows.map((y, i) =>
  `<path d="M1866 ${y}.5h3"/><text x="1871" y="${y + 4}">${((109800 - 45 * i) / 100000).toFixed(5)}</text>`
).join('');

const times = ['7 Mar 2024','7 Mar 23:10','8 Mar 00:30','8 Mar 01:50','8 Mar 03:10','8 Mar 04:30','8 Mar 05:50',
  '8 Mar 07:10','8 Mar 08:30','8 Mar 09:50','8 Mar 11:10','8 Mar 12:30','8 Mar 13:50','8 Mar 15:10',
  '8 Mar 16:30','8 Mar 17:50','8 Mar 19:10','8 Mar 20:30','8 Mar 21:50','8 Mar 23:10'];
document.getElementById('time-ticks').innerHTML = times.map((t, i) =>
  `<path d="M${302 + 64 * i}.5 614v3"/><text x="${302 + 64 * i}" y="626">${t}</text>`
).join('');
```
